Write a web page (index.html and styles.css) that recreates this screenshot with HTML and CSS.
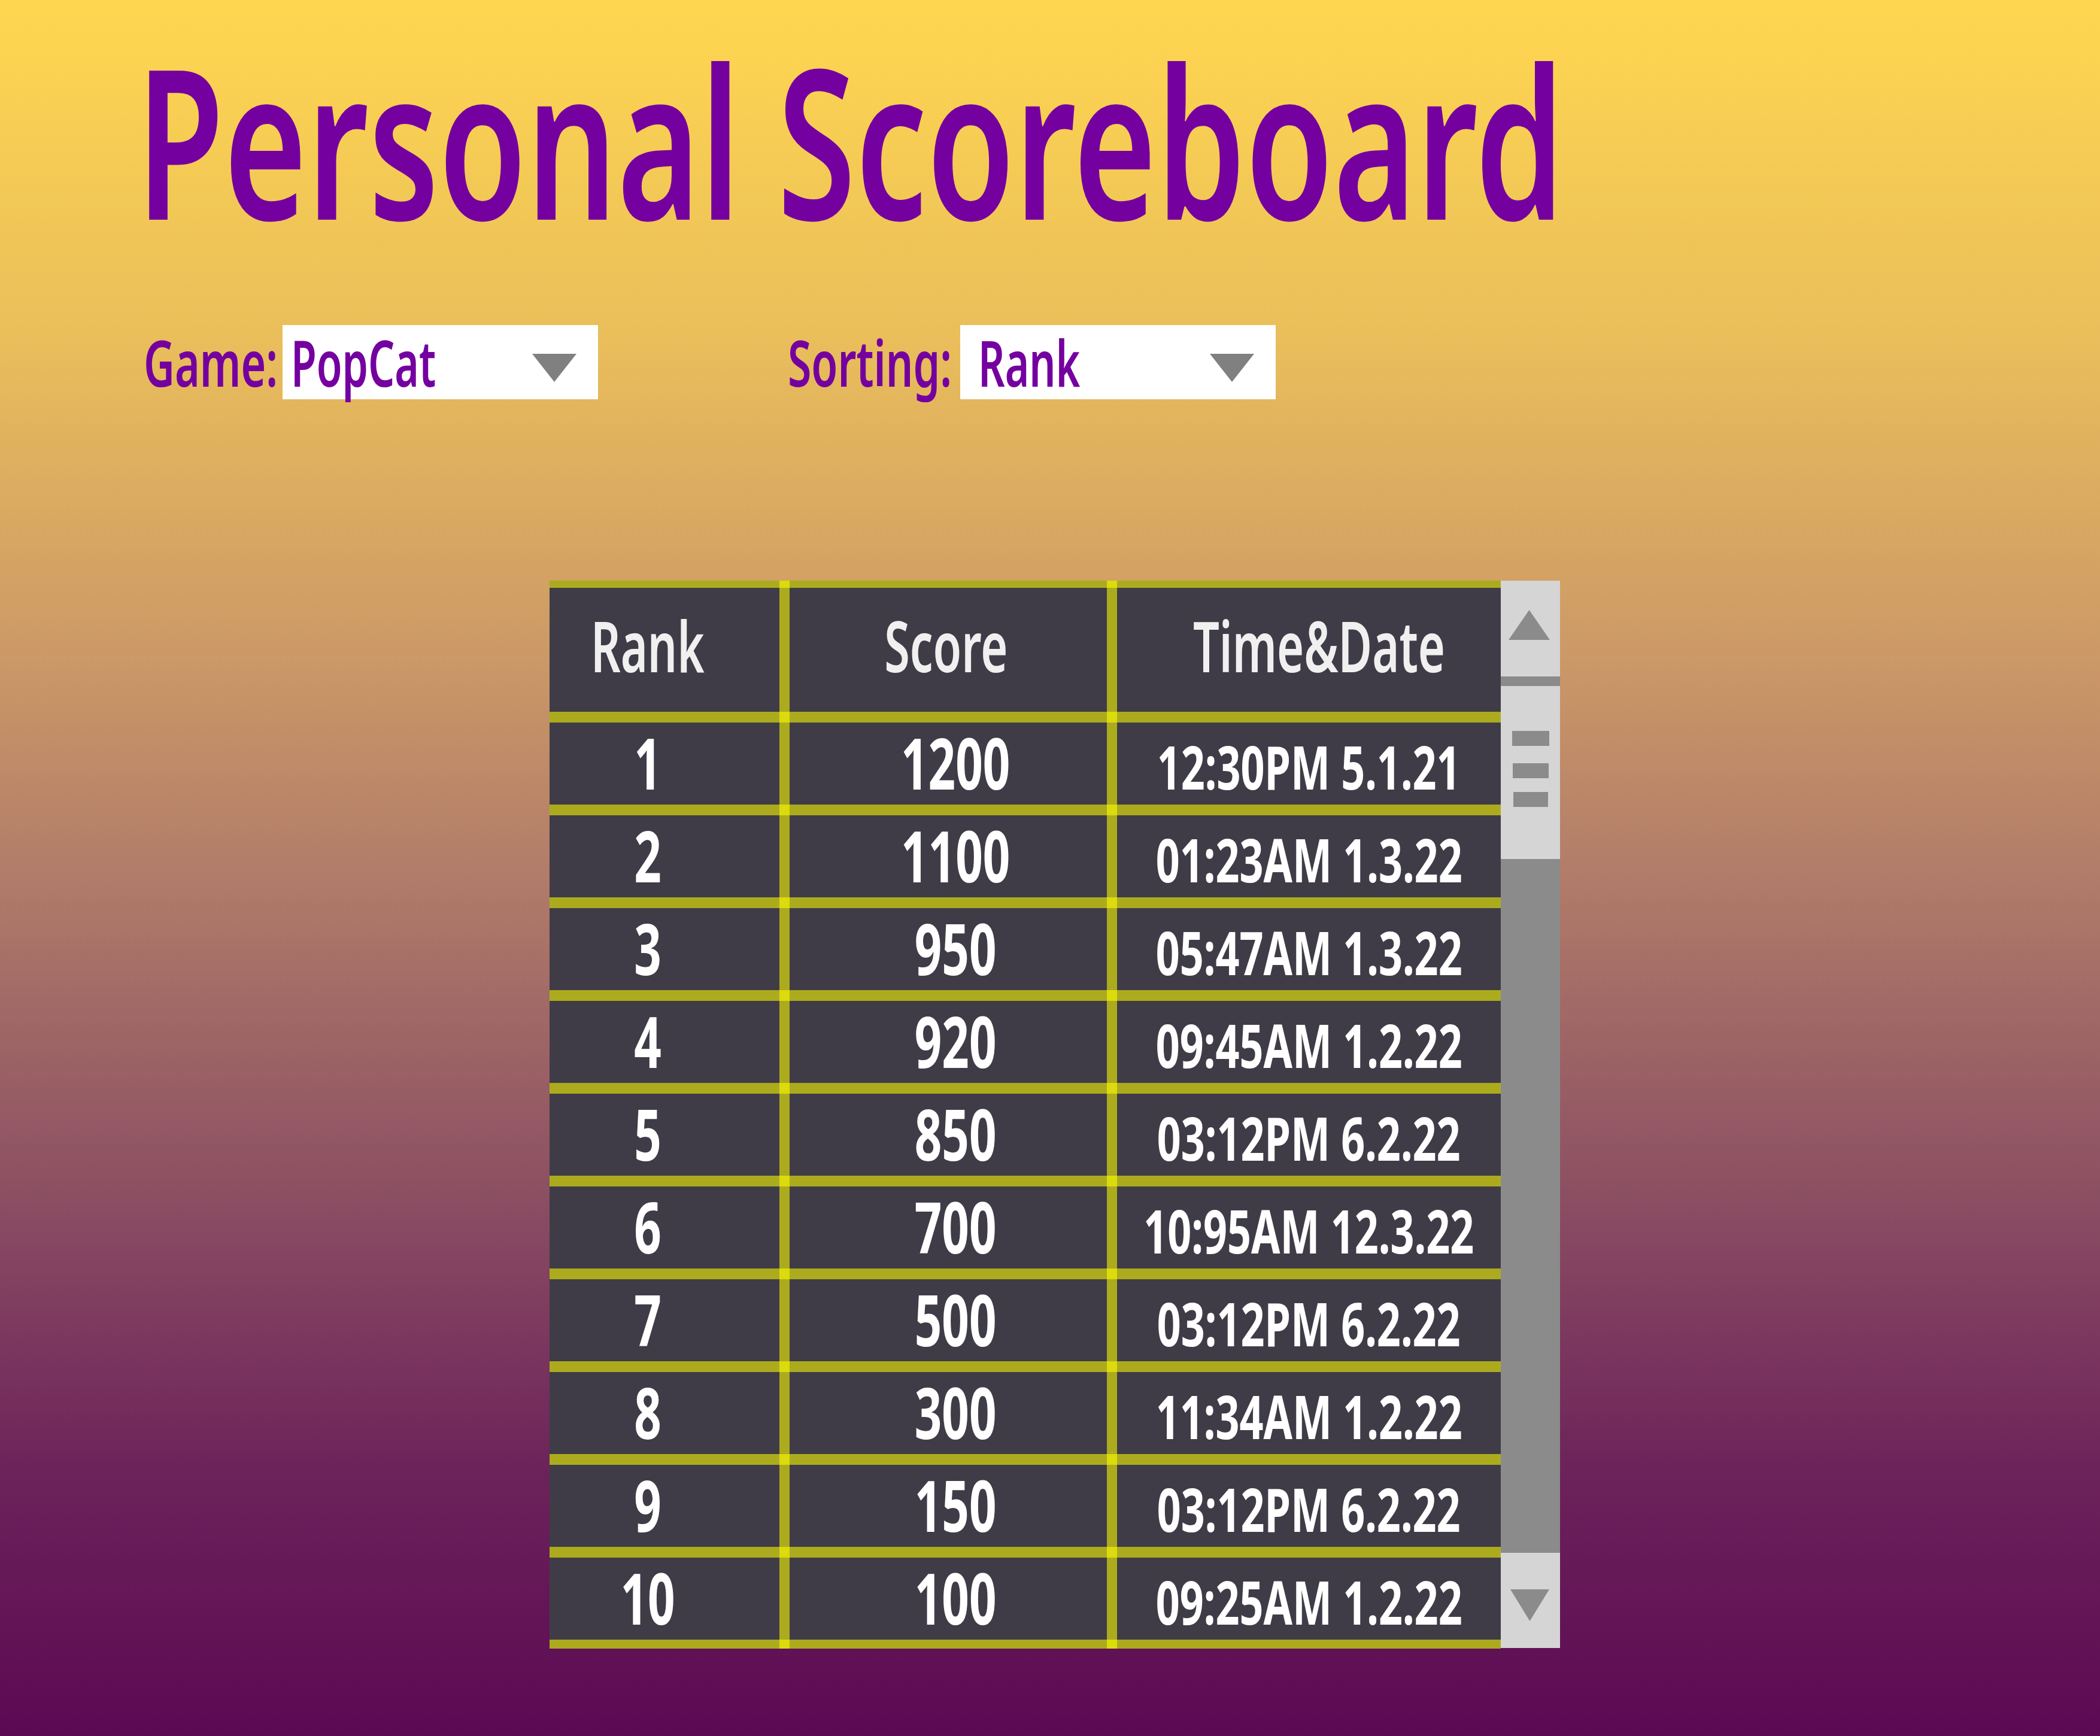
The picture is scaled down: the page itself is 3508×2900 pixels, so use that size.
FILE: index.html
```html
<!DOCTYPE html>
<html lang="en">
<head>
<meta charset="utf-8">
<title>Personal Scoreboard</title>
<link rel="stylesheet" href="styles.css">
</head>
<body>
<div class="page">
  <h1 class="title">Personal Scoreboard</h1>

  <div class="controls">
    <span class="ctl-label game-label"><span class="lbl">Game:</span></span>
    <div class="select game-select">
      <span class="select-text"><span class="lbl">PopCat</span></span>
      <svg class="caret" width="74" height="47" viewBox="0 0 74 47"><polygon points="0,0 74,0 37,47" fill="#808080"/></svg>
    </div>
    <span class="ctl-label sort-label"><span class="lbl">Sorting:</span></span>
    <div class="select sort-select">
      <span class="select-text"><span class="lbl">Rank</span></span>
      <svg class="caret" width="74" height="47" viewBox="0 0 74 47"><polygon points="0,0 74,0 37,47" fill="#808080"/></svg>
    </div>
  </div>

  <div class="board">
    <div class="table">
      <div class="row head">
        <div class="cell c1"><span class="tx">Rank</span></div>
        <div class="cell c2"><span class="tx">Score</span></div>
        <div class="cell c3"><span class="tx">Time&amp;Date</span></div>
      </div>
      <div class="row data"><div class="cell c1"><span class="tx">1</span></div><div class="cell c2"><span class="tx">1200</span></div><div class="cell c3"><span class="tx">12:30PM 5.1.21</span></div></div>
      <div class="row data"><div class="cell c1"><span class="tx">2</span></div><div class="cell c2"><span class="tx">1100</span></div><div class="cell c3"><span class="tx">01:23AM 1.3.22</span></div></div>
      <div class="row data"><div class="cell c1"><span class="tx">3</span></div><div class="cell c2"><span class="tx">950</span></div><div class="cell c3"><span class="tx">05:47AM 1.3.22</span></div></div>
      <div class="row data"><div class="cell c1"><span class="tx">4</span></div><div class="cell c2"><span class="tx">920</span></div><div class="cell c3"><span class="tx">09:45AM 1.2.22</span></div></div>
      <div class="row data"><div class="cell c1"><span class="tx">5</span></div><div class="cell c2"><span class="tx">850</span></div><div class="cell c3"><span class="tx">03:12PM 6.2.22</span></div></div>
      <div class="row data"><div class="cell c1"><span class="tx">6</span></div><div class="cell c2"><span class="tx">700</span></div><div class="cell c3"><span class="tx">10:95AM 12.3.22</span></div></div>
      <div class="row data"><div class="cell c1"><span class="tx">7</span></div><div class="cell c2"><span class="tx">500</span></div><div class="cell c3"><span class="tx">03:12PM 6.2.22</span></div></div>
      <div class="row data"><div class="cell c1"><span class="tx">8</span></div><div class="cell c2"><span class="tx">300</span></div><div class="cell c3"><span class="tx">11:34AM 1.2.22</span></div></div>
      <div class="row data"><div class="cell c1"><span class="tx">9</span></div><div class="cell c2"><span class="tx">150</span></div><div class="cell c3"><span class="tx">03:12PM 6.2.22</span></div></div>
      <div class="row data last"><div class="cell c1"><span class="tx">10</span></div><div class="cell c2"><span class="tx">100</span></div><div class="cell c3"><span class="tx">09:25AM 1.2.22</span></div></div>
    </div>

    <div class="scrollbar">
      <div class="sb-btn sb-up">
        <svg width="69" height="50" viewBox="0 0 69 50"><polygon points="34.5,0 69,50 0,50" fill="#8b8b8b"/></svg>
      </div>
      <div class="sb-band"></div>
      <div class="sb-thumb">
        <div class="grip g1"></div>
        <div class="grip g2"></div>
        <div class="grip g3"></div>
      </div>
      <div class="sb-track"></div>
      <div class="sb-btn sb-down">
        <svg width="65" height="53" viewBox="0 0 65 53"><polygon points="0,0 65,0 32.5,53" fill="#8b8b8b"/></svg>
      </div>
    </div>
  </div>
</div>
</body>
</html>
```

FILE: styles.css
```css
* { box-sizing: border-box; }

html, body {
  margin: 0;
  padding: 0;
}

body {
  font-family: "Noto Sans", "Liberation Sans", sans-serif;
}

.page {
  min-height: 2900px;
  width: 3508px;
  padding-top: 57px;
  background: linear-gradient(to bottom,
    #ffd74f 0%,
    #e9bd5b 20%,
    #cb9867 38%,
    #b27d69 50%,
    #8d5163 68%,
    #6c225a 85%,
    #5c0953 100%);
}

/* ---------- title (condensed look: stretched vertically from the baseline) ---------- */
.title {
  margin: 0 0 0 228px;
  height: 486px;
  font-size: 237.4px;
  line-height: 436px;
  font-weight: 600;
  color: #7400a0;
  white-space: nowrap;
  transform: scaleY(1.469);
  transform-origin: 0 310px;
}

/* ---------- controls ---------- */
.controls {
  display: flex;
  align-items: flex-start;
  padding-left: 240px;
  height: 124px;
}

.ctl-label {
  display: block;
  font-size: 106px;
  line-height: 124px;
  font-weight: 600;
  color: #7400a0;
  white-space: nowrap;
}

.lbl {
  display: inline-block;
  transform: scaleX(0.675);
  transform-origin: left center;
}

.select .lbl { transform: scaleX(0.655); }

.game-label { width: 232px; }
.sort-label { width: 288px; margin-left: 317px; }

.select {
  display: flex;
  align-items: flex-start;
  width: 527px;
  height: 124px;
  background: #ffffff;
}

.select-text {
  display: block;
  font-size: 106px;
  line-height: 124px;
  font-weight: 600;
  color: #7400a0;
  white-space: nowrap;
}

.game-select .select-text { padding-left: 14px; }
.sort-select .select-text { padding-left: 30px; }

.caret {
  display: block;
  margin-left: auto;
  margin-right: 36px;
  margin-top: 48px;
  flex: none;
}

/* ---------- table ---------- */
.board {
  display: flex;
  align-items: flex-start;
  margin-top: 303px;
  margin-left: 918px;
}

.table {
  width: 1589px;
  background-color: #3f3c47;
  background-image: linear-gradient(to right,
    transparent 384px,
    #acab1e 384px, #acab1e 401px,
    transparent 401px, transparent 931px,
    #acab1e 931px, #acab1e 948px,
    transparent 948px);
}

.row {
  display: grid;
  grid-template-columns: 384px 530px 641px;
  column-gap: 17px;
  border-top: 18px solid rgba(255, 255, 0, 0.57);
}

.row.head {
  border-top-width: 12px;
  height: 219px;
}

.row.data { height: 155px; }

.row.last {
  height: 170px;
  border-bottom: 15px solid rgba(255, 255, 0, 0.57);
}

.cell {
  display: flex;
  justify-content: center;
  align-items: flex-start;
  white-space: nowrap;
  color: #ffffff;
}

.tx {
  display: block;
  flex: none;
  transform: scaleX(0.67);
}

.head .cell {
  font-size: 118px;
  line-height: 192px;
  font-weight: 600;
  color: #f0f0f0;
}

.head .tx { transform: scaleX(0.655); }

.data .cell {
  font-size: 119px;
  line-height: 132px;
  font-weight: 700;
}

.data .c3 {
  font-size: 100px;
  line-height: 146px;
}

.data .c3 .tx { transform: scaleX(0.70); }

.c1 { padding-right: 56px; }
.head .c2 { padding-right: 8px; }
.data .c2 { padding-left: 24px; }
.head .c3 { padding-left: 33px; }

/* ---------- scrollbar ---------- */
.scrollbar {
  display: flex;
  flex-direction: column;
  width: 99px;
  height: 1783px;
}

.sb-btn {
  background: #d5d5d5;
}

.sb-btn svg { display: block; }

.sb-up {
  height: 160px;
  padding-top: 49px;
  padding-left: 13px;
}

.sb-band {
  height: 16px;
  background: #8b8b8b;
}

.sb-thumb {
  height: 289px;
  background: #d5d5d5;
  padding-top: 75px;
}

.grip {
  height: 25px;
  background: #8b8b8b;
}

.g1 { width: 62px; margin-left: 19px; }
.g2 { width: 60px; margin-left: 20px; margin-top: 29px; }
.g3 { width: 58px; margin-left: 21px; margin-top: 23px; }

.sb-track {
  flex: 1;
  background: #8b8b8b;
}

.sb-down {
  height: 159px;
  padding-top: 61px;
  padding-left: 16px;
}
```
